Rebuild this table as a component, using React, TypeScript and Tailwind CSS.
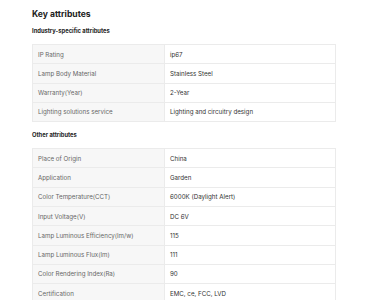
import React from 'react';

const industry: [string, string][] = [
  ['IP Rating', 'ip67'],
  ['Lamp Body Material', 'Stainless Steel'],
  ['Warranty(Year)', '2-Year'],
  ['Lighting solutions service', 'Lighting and circuitry design'],
];

const other: [string, string][] = [
  ['Place of Origin', 'China'],
  ['Application', 'Garden'],
  ['Color Temperature(CCT)', '6000K (Daylight Alert)'],
  ['Input Voltage(V)', 'DC 6V'],
  ['Lamp Luminous Efficiency(lm/w)', '115'],
  ['Lamp Luminous Flux(lm)', '111'],
  ['Color Rendering Index(Ra)', '90'],
  ['Certification', 'EMC, ce, FCC, LVD'],
];

function AttrTable({ rows }: { rows: [string, string][] }) {
  return (
    <div className="border border-[#ebebeb] border-b-0 w-[304px]">
      {rows.map(([k, v]) => (
        <div key={k} className="flex h-[19.3px] border-b border-[#ebebeb]">
          <div className="w-[132px] shrink-0 bg-[#f7f7f7] border-r border-[#ebebeb] pl-[5px] flex items-center text-[#666]">
            {k}
          </div>
          <div className="flex-1 pl-[5px] flex items-center text-[#333]">{v}</div>
        </div>
      ))}
    </div>
  );
}

export default function App() {
  return (
    <div className="w-[367px] h-[300px] overflow-hidden bg-white px-[32px] pt-[8px] text-[6.2px] font-['Inter',sans-serif]">
      <div className="text-[8.6px] leading-[12px] font-bold text-[#222]">Key attributes</div>
      <div className="mt-[6px] text-[5.8px] leading-[10px] font-bold text-[#222]">Industry-specific attributes</div>
      <div className="mt-[8px]">
        <AttrTable rows={industry} />
      </div>
      <div className="mt-[8px] text-[5.8px] leading-[10px] font-bold text-[#222]">Other attributes</div>
      <div className="mt-[8px]">
        <AttrTable rows={other} />
      </div>
    </div>
  );
}
